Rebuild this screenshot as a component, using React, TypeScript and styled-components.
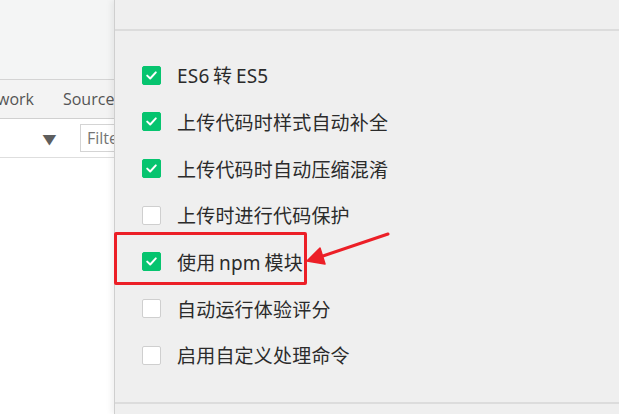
import React from "react"
import styled, { createGlobalStyle } from "styled-components"

const GlobalStyle = createGlobalStyle`
    html, body {
        margin: 0;
        padding: 0;
        width: 100%;
        height: 100%;
        overflow: hidden;
    }
    body {
        font-family: "Noto Sans CJK SC", "Noto Sans", sans-serif;
    }
`

type TOption = {
    label: string
    checked: boolean
}

const options: TOption[] = [
    { label: "ES6 转 ES5", checked: true },
    { label: "上传代码时样式自动补全", checked: true },
    { label: "上传代码时自动压缩混淆", checked: true },
    { label: "上传时进行代码保护", checked: false },
    { label: "使用 npm 模块", checked: true },
    { label: "自动运行体验评分", checked: false },
    { label: "启用自定义处理命令", checked: false },
]

const Check = () => (
    <svg width="13" height="13" viewBox="0 0 13 13">
        <path d="M2.2 6.6 L5.2 9.5 L10.8 3.4" fill="none" stroke="#fff" strokeWidth="2" strokeLinecap="round" strokeLinejoin="round"/>
    </svg>
)

export default function App() {
    return (
        <Frame>
            <GlobalStyle/>
            <DevTools>
                <Preview/>
                <Tabs>
                    <Tab>work</Tab>
                    <Tab>Sources</Tab>
                </Tabs>
                <Toolbar>
                    <Caret>▼</Caret>
                    <Divider/>
                    <Filter>Filter</Filter>
                </Toolbar>
            </DevTools>
            <Panel>
                <PanelHead/>
                <List>
                    {options.map((o) => (
                        <Row key={o.label}>
                            <Box $checked={o.checked}>{o.checked && <Check/>}</Box>
                            <Label>{o.label}</Label>
                        </Row>
                    ))}
                </List>
                <PanelFoot/>
            </Panel>
            <Highlight/>
            <Arrow width="100" height="40" viewBox="0 0 100 40">
                <path d="M88 4 L20 27" stroke="#ec1f27" strokeWidth="3" strokeLinecap="round"/>
                <path d="M7 31 L20 18 L25 34 Z" fill="#ec1f27" stroke="#ec1f27" strokeWidth="1.5" strokeLinejoin="round"/>
            </Arrow>
        </Frame>
    )
}

const Frame = styled.div`
    position: relative;
    display: flex;
    width: 619px;
    height: 414px;
    overflow: hidden;
    background: #ffffff;
`

const DevTools = styled.div`
    width: 114px;
    flex-shrink: 0;
    display: flex;
    flex-direction: column;
    overflow: hidden;
    background: #ffffff;
`

const Preview = styled.div`
    height: 79px;
    background: #f4f5f5;
    border-bottom: 1px solid #d4d4d4;
`

const Tabs = styled.div`
    height: 38px;
    display: flex;
    align-items: center;
    gap: 29px;
    background: #f3f3f3;
    border-bottom: 1px solid #d0d0d0;
    font-family: "Open Sans", "Noto Sans", sans-serif;
    font-size: 16px;
    color: #555555;
    white-space: nowrap;
`

const Tab = styled.div`
    &:first-child {
        margin-left: -3px;
    }
`

const Toolbar = styled.div`
    height: 38px;
    display: flex;
    align-items: center;
    border-bottom: 1px solid #dedede;
    background: #ffffff;
    white-space: nowrap;
`

const Caret = styled.div`
    margin-left: 43px;
    font-size: 13px;
    color: #5e5e5e;
    transform: scaleX(1.1);
`

const Divider = styled.div`
    width: 1px;
    height: 20px;
    background: #cfcfcf;
    margin: 0 10px 0 14px;
`

const Filter = styled.div`
    height: 26px;
    padding: 0 6px;
    border: 1px solid #d4d4d4;
    border-right: none;
    display: flex;
    align-items: center;
    font-family: "Open Sans", "Noto Sans", sans-serif;
    font-size: 16px;
    color: #757575;
`

const Panel = styled.div`
    flex: 1;
    display: flex;
    flex-direction: column;
    background: #efefef;
    border-left: 1px solid #cfcfcf;
    box-shadow: -3px 0 6px rgba(0, 0, 0, 0.06);
`

const PanelHead = styled.div`
    height: 29px;
    flex-shrink: 0;
    border-bottom: 2px solid #dcdcdc;
`

const List = styled.div`
    flex: 1;
    display: flex;
    flex-direction: column;
    padding: 21px 0 0 27px;
`

const Row = styled.div`
    height: 46.67px;
    display: flex;
    align-items: center;
    gap: 16px;
`

const Box = styled.div<{ $checked: boolean }>`
    width: 19px;
    height: 19px;
    box-sizing: border-box;
    border-radius: 2px;
    display: flex;
    align-items: center;
    justify-content: center;
    background: ${(p) => (p.$checked ? "#06c46f" : "#ffffff")};
    border: 1px solid ${(p) => (p.$checked ? "#06c46f" : "#cfcfcf")};
`

const Label = styled.div`
    font-family: "Noto Sans", "Noto Sans CJK SC", sans-serif;
    font-size: 19px;
    font-weight: 400;
    color: #2b2b2b;
    letter-spacing: 0.2px;
    word-spacing: -1.5px;
`

const PanelFoot = styled.div`
    height: 10px;
    flex-shrink: 0;
    border-top: 2px solid #dcdcdc;
`

const Highlight = styled.div`
    position: absolute;
    left: 114px;
    top: 232px;
    width: 193px;
    height: 53px;
    box-sizing: border-box;
    border: 3px solid #ec1f27;
    border-radius: 2px;
`

const Arrow = styled.svg`
    position: absolute;
    left: 300px;
    top: 230px;
`
